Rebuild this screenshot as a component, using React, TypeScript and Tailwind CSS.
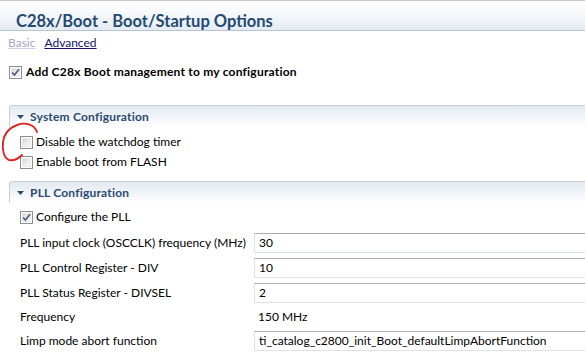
import React from "react";

const FONT = { fontFamily: "Lato, 'Liberation Sans', sans-serif" };

function CheckBox({ checked }: { checked?: boolean }) {
  return (
    <div className="relative w-[13px] h-[13px] shrink-0 border border-[#8f8f8f] bg-white">
      <div className="absolute inset-[1px] bg-gradient-to-br from-[#d6d6d6] via-[#ececec] to-[#fafafa] border border-[#e9e9e9]" />
      {checked && (
        <svg className="absolute left-[1px] top-[1px]" width="9" height="9" viewBox="0 0 9 9">
          <path d="M1 4.5 L3.5 7 L8 1.2" fill="none" stroke="#4b5d87" strokeWidth="1.7" />
        </svg>
      )}
    </div>
  );
}

function SectionHeader({ title }: { title: string }) {
  return (
    <div className="ml-[9px] h-[22px] flex items-center border-t border-l border-[#c9cfd6] rounded-tl-[3px] bg-gradient-to-b from-[#e2e9f1] to-[#ffffff]">
      <svg className="ml-[7px]" width="7" height="4" viewBox="0 0 7 4">
        <path d="M0 0 H7 L3.5 4 Z" fill="#2d4a6e" />
      </svg>
      <span className="ml-[6px] text-[12px] font-bold text-[#2a4a70] tracking-[0.2px] leading-none">{title}</span>
    </div>
  );
}

function Row({ label, value }: { label: string; value: string }) {
  return (
    <div className="flex items-center h-[20px]">
      <span className="w-[234px] shrink-0 pl-[20px] box-content text-[12px] text-black leading-none whitespace-nowrap">{label}</span>
      <div className="h-[20px] w-[400px] shrink-0 border border-[#dfe3e8] border-t-[#abadb3] bg-white flex items-center pl-[4px] text-[12px] text-black leading-none whitespace-nowrap">
        {value}
      </div>
    </div>
  );
}

export default function App() {
  return (
    <div className="relative w-[585px] h-[364px] overflow-hidden bg-white text-black" style={FONT}>
      {/* Title band */}
      <div className="h-[31px] overflow-hidden border-t border-b border-t-[#c5ccd3] border-b-[#b7c5d3] bg-gradient-to-b from-[#ffffff] via-[#f4f7fa] to-[#e5ebf2] flex items-start pt-[10px] pl-[16px]">
        <span className="text-[16.5px] font-bold text-[#244a72] leading-[20px]">C28x/Boot - Boot/Startup Options</span>
      </div>

      {/* Links */}
      <div className="mt-[4px] h-[16px] flex items-center pl-[8px] text-[12px] leading-none">
        <span className="text-[#a6a6c4] underline decoration-[#d0d0e0]">Basic</span>
        <span className="ml-[9px] text-[#12126e] underline">Advanced</span>
      </div>

      {/* Add boot management */}
      <div className="mt-[13px] h-[16px] flex items-center pl-[9px]">
        <CheckBox checked />
        <span className="ml-[4px] text-[12px] font-bold leading-none tracking-[0.22px]">Add C28x Boot management to my configuration</span>
      </div>

      {/* System Configuration */}
      <div className="mt-[25px]">
        <SectionHeader title="System Configuration" />
        <div className="mt-[7px] flex flex-col gap-[4px] pl-[20px]">
          <div className="h-[16px] flex items-center">
            <CheckBox />
            <span className="ml-[3px] text-[12px] leading-none">Disable the watchdog timer</span>
          </div>
          <div className="h-[16px] flex items-center">
            <CheckBox />
            <span className="ml-[3px] text-[12px] leading-none">Enable boot from FLASH</span>
          </div>
        </div>
      </div>

      {/* PLL Configuration */}
      <div className="mt-[11px]">
        <SectionHeader title="PLL Configuration" />
        <div className="mt-[6px] h-[16px] flex items-center pl-[20px]">
          <CheckBox checked />
          <span className="ml-[3px] text-[12px] leading-none">Configure the PLL</span>
        </div>
        <div className="mt-[8px] flex flex-col gap-[5px]">
          <Row label="PLL input clock (OSCCLK) frequency (MHz)" value="30" />
          <Row label="PLL Control Register - DIV" value="10" />
          <Row label="PLL Status Register - DIVSEL" value="2" />
          <div className="flex items-center h-[18px] text-[12px] leading-none">
            <span className="w-[234px] shrink-0 pl-[20px] box-content">Frequency</span>
            <span className="pl-[4px]">150 MHz</span>
          </div>
          <Row label="Limp mode abort function" value="ti_catalog_c2800_init_Boot_defaultLimpAbortFunction" />
        </div>
      </div>

      {/* Red hand-drawn circle annotation */}
      <svg className="absolute left-0 top-[118px] pointer-events-none" width="42" height="48" viewBox="0 0 42 48">
        <path
          d="M37 14 C34 6, 25 4, 17 7 C9 10, 4 16, 3 24 C2 32, 4 40, 9 42 C14 43, 19 40, 22 37"
          fill="none"
          stroke="#e3231f"
          strokeWidth="1.9"
          strokeLinecap="round"
        />
      </svg>
    </div>
  );
}
